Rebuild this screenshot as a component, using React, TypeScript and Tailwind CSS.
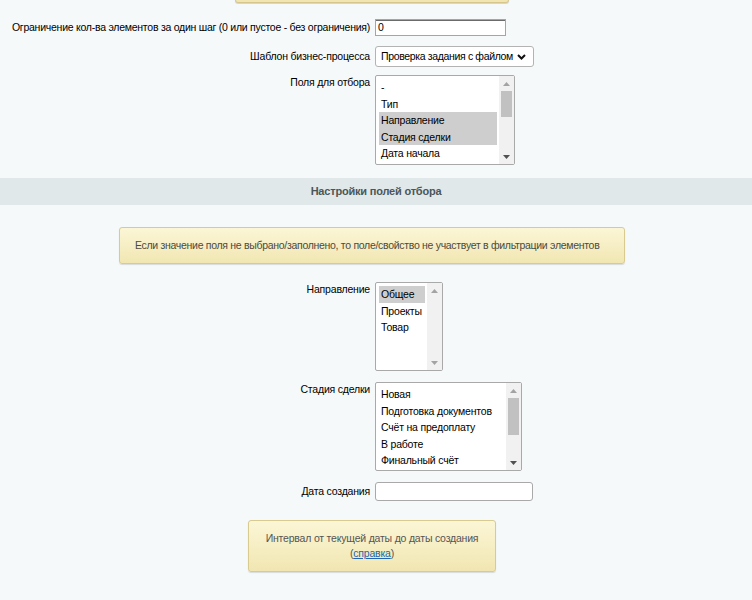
import React from "react";

type ListProps = {
  items: string[];
  selected: number[];
  width: number;
  height: number;
  thumb?: { top: number; height: number };
  canScrollDown?: boolean;
};

function Triangle({ up, dark }: { up: boolean; dark: boolean }) {
  return (
    <svg width="7" height="4" viewBox="0 0 7 4" className="block">
      <path d={up ? "M0 4 L3.5 0 L7 4 Z" : "M0 0 L3.5 4 L7 0 Z"} fill={dark ? "#505050" : "#a3a3a3"} />
    </svg>
  );
}

function ListBox({ items, selected, width, height, thumb, canScrollDown }: ListProps) {
  return (
    <div
      className="relative flex rounded-[2px] border border-[#a9a9a9] bg-white"
      style={{ width, height }}
    >
      <div className="flex-1 overflow-hidden pt-[3px] pl-[3px] pr-[2px]">
        {items.map((it, i) => (
          <div
            key={it}
            className={
              "h-[16.6px] whitespace-nowrap pl-[2px] leading-[16.6px] " +
              (selected.includes(i) ? "bg-[#cecece]" : "")
            }
          >
            {it}
          </div>
        ))}
      </div>
      <div className="relative w-[15px] shrink-0 bg-[#f1f1f1]">
        <div className="flex h-[15px] items-center justify-center">
          <Triangle up dark={false} />
        </div>
        {thumb && (
          <div
            className="absolute left-[2px] right-[2px] bg-[#c1c1c1]"
            style={{ top: thumb.top, height: thumb.height }}
          />
        )}
        <div className="absolute bottom-0 left-0 right-0 flex h-[15px] items-center justify-center">
          <Triangle up={false} dark={!!canScrollDown} />
        </div>
      </div>
    </div>
  );
}

function Row({
  label,
  children,
  align = "center",
  className = "",
}: {
  label: string;
  children: React.ReactNode;
  align?: "center" | "start";
  className?: string;
}) {
  return (
    <div
      className={
        "grid grid-cols-[375px_1fr] " + (align === "center" ? "items-center " : "items-start ") + className
      }
    >
      <div className="whitespace-nowrap pr-[5px] text-right">{label}</div>
      <div>{children}</div>
    </div>
  );
}

export default function App() {
  return (
    <div className="min-h-[600px] w-[752px] overflow-hidden bg-[#f5f9f9] font-['Liberation_Sans',Arial,sans-serif] text-[10.5px] tracking-[-0.2px] text-black">
      {/* tail of the note box above */}
      <div className="h-[4px] overflow-hidden">
        <div className="ml-[235px] mt-[-30px] h-[33px] w-[274px] rounded-[3px] border border-[#d6c68d] bg-[#f1e6b1] shadow-[0_1px_1px_rgba(0,0,0,0.15)]" />
      </div>

      <Row label="Ограничение кол-ва элементов за один шаг (0 или пустое - без ограничения)" className="mt-[15px] tracking-[-0.25px]">
        <div className="flex h-[17px] w-[131px] items-center border border-[#a5a5a5] bg-white pl-[2px] shadow-[inset_0_1px_0_#6b6b6b]">
          0
        </div>
      </Row>

      <Row label="Шаблон бизнес-процесса" className="mt-[10px]">
        <div className="flex h-[21px] w-[159px] items-center justify-between rounded-[3px] border border-[#b3b3b3] bg-white pl-[5px] pr-[7px]">
          <span className="whitespace-nowrap tracking-[-0.35px]">Проверка задания с файлом</span>
          <svg width="9" height="6" viewBox="0 0 9 6" className="shrink-0">
            <path d="M1 1 L4.5 4.5 L8 1" stroke="#111" strokeWidth="2" fill="none" />
          </svg>
        </div>
      </Row>

      <Row label="Поля для отбора" align="start" className="mt-[8px]">
        <ListBox
          items={["-", "Тип", "Направление", "Стадия сделки", "Дата начала"]}
          selected={[2, 3]}
          width={140}
          height={90}
          thumb={{ top: 15, height: 26 }}
          canScrollDown
        />
      </Row>

      <div className="mt-[13px] flex h-[27px] items-center justify-center bg-[#e0e8ea] text-[11px] font-bold text-[#4b5659]">
        Настройки полей отбора
      </div>

      <div className="ml-[119px] mt-[22px] flex h-[37px] w-[506px] items-center whitespace-nowrap rounded-[3px] border border-[#d9ca8f] bg-gradient-to-b from-[#fbf6d6] to-[#f1e6b2] pl-[15px] tracking-[-0.3px] text-[#4b4b40] shadow-[0_1px_1px_rgba(0,0,0,0.12)]">
        Если значение поля не выбрано/заполнено, то поле/свойство не участвует в фильтрации элементов
      </div>

      <Row label="Направление" align="start" className="mt-[18px]">
        <ListBox items={["Общее", "Проекты", "Товар"]} selected={[0]} width={68} height={89} />
      </Row>

      <Row label="Стадия сделки" align="start" className="mt-[11px]">
        <ListBox
          items={["Новая", "Подготовка документов", "Счёт на предоплату", "В работе", "Финальный счёт"]}
          selected={[]}
          width={147}
          height={89}
          thumb={{ top: 15, height: 37 }}
          canScrollDown
        />
      </Row>

      <Row label="Дата создания" className="mt-[11px]">
        <div className="h-[19px] w-[158px] rounded-[3px] border border-[#a9a9a9] bg-white" />
      </Row>

      <div className="ml-[248px] mt-[19px] flex h-[52px] w-[248px] flex-col items-center justify-center rounded-[3px] border border-[#d9ca8f] bg-gradient-to-b from-[#fbf6d6] to-[#f1e6b2] leading-[15px] text-[#555] shadow-[0_1px_1px_rgba(0,0,0,0.12)]">
        <div className="whitespace-nowrap">Интервал от текущей даты до даты создания</div>
        <div>
          (<a href="#" className="text-[#2066b0] underline">справка</a>)
        </div>
      </div>
    </div>
  );
}
